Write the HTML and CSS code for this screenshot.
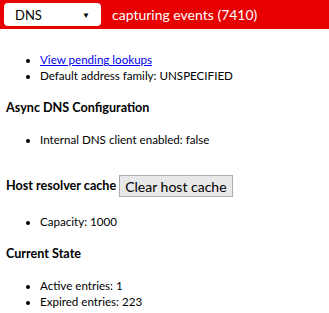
FILE: index.html
```html
<!DOCTYPE html>
<html lang="en">
<head>
    <meta charset="UTF-8">
    <title>net-internals</title>
    <link rel="stylesheet" href="styles.css">
</head>
<body>

    <div class="status-bar">
        <div class="tab-select">
            <span>DNS</span>
            <span class="arrow">&#9660;</span>
        </div>
        <span class="capture-status">capturing events (7410)</span>
    </div>

    <div class="content">
        <ul class="first">
            <li><a href="#">View pending lookups</a></li>
            <li>Default address family: UNSPECIFIED</li>
        </ul>

        <h4>Async DNS Configuration</h4>
        <ul>
            <li>Internal DNS client enabled: false</li>
        </ul>

        <h4 class="cache-title">Host resolver cache <button>Clear host cache</button></h4>
        <ul>
            <li>Capacity: 1000</li>
        </ul>

        <h4>Current State</h4>
        <ul>
            <li>Active entries: 1</li>
            <li>Expired entries: 223</li>
        </ul>
    </div>

</body>
</html>
```

FILE: styles.css
```css
body {
    margin: 0;
    font-family: Lato, 'Liberation Sans', sans-serif;
    font-size: 11.6px;
    line-height: 16px;
    color: #000;
    background: #fff;
}

.status-bar {
    height: 29px;
    background-color: #e80000;
    display: flex;
    align-items: center;
    padding-left: 4px;
    box-sizing: border-box;
}

.tab-select {
    width: 97px;
    height: 23px;
    box-sizing: border-box;
    background: #fff;
    border-radius: 4px;
    display: flex;
    align-items: center;
    justify-content: space-between;
    padding: 0 11px 0 11px;
    font-size: 13px;
}

.tab-select .arrow {
    font-size: 8px;
}

.capture-status {
    color: #fff;
    font-size: 14px;
    margin-left: 11px;
}

.content {
    padding: 0 6px;
}

ul {
    margin: 16px 0;
    padding-left: 34px;
}

ul.first {
    margin-top: 23px;
}

h4 {
    margin: 16px 0;
    font-size: 12.6px;
    font-weight: bold;
}

.cache-title {
    margin-top: 27px;
    margin-bottom: 17px;
    display: flex;
    align-items: center;
    gap: 3px;
}

button {
    font-family: Lato, 'Liberation Sans', sans-serif;
    font-size: 14px;
    font-weight: normal;
    height: 22px;
    padding: 0 5px;
    background: #e8e8e8;
    border: 1px solid #adadad;
    border-radius: 0;
}

a {
    color: #0000ee;
}
```
